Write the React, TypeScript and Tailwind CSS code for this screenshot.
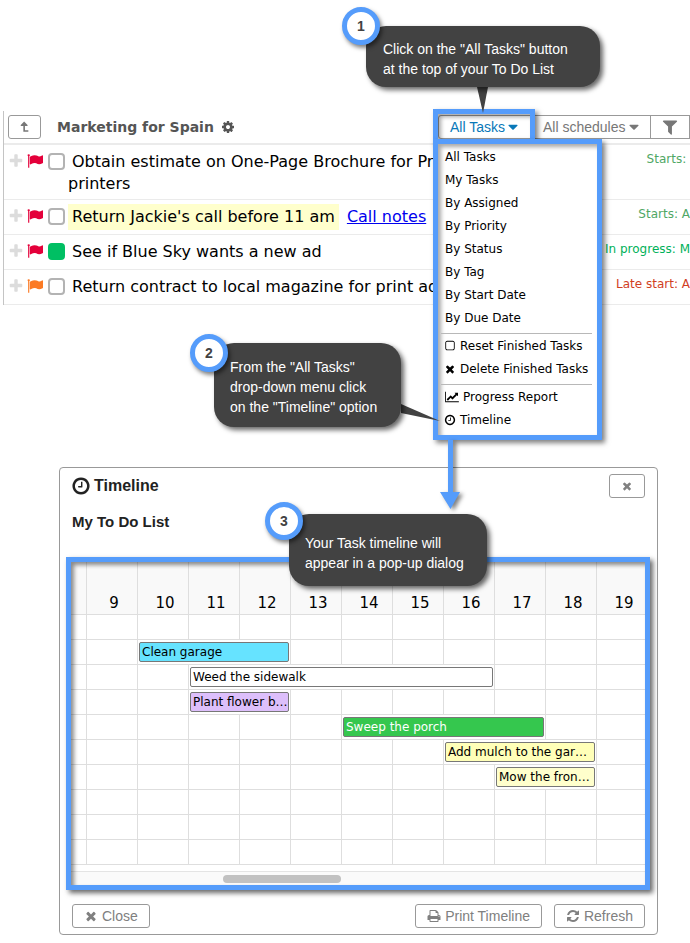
import type { ReactNode } from "react"

const ICONS = {
  plus: "M1600 736v192q0 40-28 68t-68 28h-416v416q0 40-28 68t-68 28h-192q-40 0-68-28t-28-68v-416h-416q-40 0-68-28t-28-68v-192q0-40 28-68t68-28h416v-416q0-40 28-68t68-28h192q40 0 68 28t28 68v416h416q40 0 68 28t28 68z",
  flag: "M320 256q0 72-64 110v1266q0 13-9.5 22.5t-22.5 9.5h-64q-13 0-22.5-9.5t-9.5-22.5v-1266q-64-38-64-110 0-53 37.5-90.5t90.5-37.5 90.5 37.5 37.5 90.5zm1472 64v763q0 25-12.5 38.5t-39.5 27.5q-215 116-369 116-61 0-123.5-22t-108.5-48-115.5-48-142.5-22q-192 0-464 146-17 9-33 9-26 0-45-19t-19-45v-742q0-32 31-55 21-14 79-43 236-120 421-120 107 0 200 29t219 88q38 19 88 19 54 0 117.5-21t110-47 88-47 54.5-21q26 0 45 19t19 45z",
  cog: "M1152 896q0-106-75-181t-181-75-181 75-75 181 75 181 181 75 181-75 75-181zm512-109v222q0 12-8 23t-20 13l-185 28q-19 54-39 91 35 50 107 138 10 12 10 25t-9 23q-27 37-99 108t-94 71q-12 0-26-9l-138-108q-44 23-91 38-16 136-29 186-7 28-36 28h-222q-14 0-24.5-8.5t-11.5-21.5l-28-184q-49-16-90-37l-141 107q-10 9-25 9-14 0-25-11-126-114-165-168-7-10-7-23 0-12 8-23 15-21 51-66.5t54-70.5q-27-50-41-99l-183-27q-13-2-21-12.5t-8-23.5v-222q0-12 8-23t19-13l186-28q14-46 39-92-40-57-107-138-10-12-10-24 0-10 9-23 26-36 98.5-107.5t94.5-71.5q13 0 26 10l138 107q44-23 91-38 16-136 29-186 7-28 36-28h222q14 0 24.5 8.5t11.5 21.5l28 184q49 16 90 37l142-107q9-9 24-9 13 0 25 10 129 119 165 170 7 8 7 22 0 12-8 23-15 21-51 66.5t-54 70.5q26 50 41 98l183 28q13 2 21 12.5t8 23.5z",
  filter: "M1595 295q17 41-14 70l-493 493v742q0 42-39 59-13 5-25 5-27 0-45-19l-256-256q-19-19-19-45v-486l-493-493q-31-29-14-70 17-39 59-39h1280q42 0 59 39z",
  times: "M1490 1322q0 40-28 68l-136 136q-28 28-68 28t-68-28l-294-294-294 294q-28 28-68 28t-68-28l-136-136q-28-28-28-68t28-68l294-294-294-294q-28-28-28-68t28-68l136-136q28-28 68-28t68 28l294 294 294-294q28-28 68-28t68 28l136 136q28 28 28 68t-28 68l-294 294 294 294q28 28 28 68z",
  clock: "M1024 544v448q0 14-9 23t-23 9h-320q-14 0-23-9t-9-23v-64q0-14 9-23t23-9h224v-352q0-14 9-23t23-9h64q14 0 23 9t9 23zm416 352q0-148-73-273t-198-198-273-73-273 73-198 198-73 273 73 273 198 198 273 73 273-73 198-198 73-273zm224 0q0 209-103 385.5t-279.5 279.5-385.5 103-385.5-103-279.5-279.5-103-385.5 103-385.5 279.5-279.5 385.5-103 385.5 103 279.5 279.5 103 385.5z",
  square: "M1312 256h-832q-66 0-113 47t-47 113v832q0 66 47 113t113 47h832q66 0 113-47t47-113v-832q0-66-47-113t-113-47zm288 160v832q0 119-84.5 203.5t-203.5 84.5h-832q-119 0-203.5-84.5t-84.5-203.5v-832q0-119 84.5-203.5t203.5-84.5h832q119 0 203.5 84.5t84.5 203.5z",
  chart: "M2048 1536v128h-2048v-1536h128v1408h1920zm-128-1248v435q0 21-19.5 29.5t-35.5-7.5l-121-121-633 633q-10 10-23 10t-23-10l-233-233-416 416-192-192 585-585q10-10 23-10t23 10l233 233 464-464-121-121q-16-16-7.5-35.5t29.5-19.5h435q14 0 23 9t9 23z",
  print: "M448 1536h896v-256h-896v256zm0-640h896v-384h-160q-40 0-68-28t-28-68v-160h-640v640zm1152 64q0-26-19-45t-45-19-45 19-19 45 19 45 45 19 45-19 19-45zm128 0v416q0 13-9.5 22.5t-22.5 9.5h-224v160q0 40-28 68t-68 28h-960q-40 0-68-28t-28-68v-160h-224q-13 0-22.5-9.5t-9.5-22.5v-416q0-79 56.5-135.5t135.5-56.5h64v-544q0-40 28-68t68-28h672q40 0 88 20t76 48l152 152q28 28 48 76t20 88v256h64q79 0 135.5 56.5t56.5 135.5z",
  refresh: "M1639 1056q0 5-1 7-64 268-268 434.5t-478 166.5q-146 0-282.5-55t-243.5-157l-129 129q-19 19-45 19t-45-19-19-45v-448q0-26 19-45t45-19h448q26 0 45 19t19 45-19 45l-137 137q71 66 161 102t187 36q134 0 250-65t186-179q11-17 53-117 8-23 30-23h192q13 0 22.5 9.5t9.5 22.5zm25-800v448q0 26-19 45t-45 19h-448q-26 0-45-19t-19-45 19-45l138-138q-148-137-349-137-134 0-250 65t-186 179q-11 17-53 117-8 23-30 23h-199q-13 0-22.5-9.5t-9.5-22.5v-7q65-268 270-434.5t480-166.5q146 0 284 55.5t245 156.5l130-129q19-19 45-19t45 19 19 45z",
  caret: "M1408 704q0 26-19 45l-448 448q-19 19-45 19t-45-19l-448-448q-19-19-19-45t19-45 45-19h896q26 0 45 19t19 45z",
  level: "M800 280l-380 400v110h290v650h560v-190h-380v-460h290v-110z",
}

type IconName = keyof typeof ICONS

function Icon({ name, className }: { name: IconName; className: string }) {
  return (
    <svg
      viewBox={name === "chart" ? "0 0 2048 1792" : "0 0 1792 1792"}
      className={`shrink-0 fill-current ${className}`}
      aria-hidden="true"
    >
      <path d={ICONS[name]} />
    </svg>
  )
}

interface Task {
  title: ReactNode
  label: string
  flag: string
  checked?: boolean
  highlight?: boolean
  link?: string
  status: string
  statusColor: string
}

const tasks: Task[] = [
  {
    title: (
      <>
        Obtain estimate on One-Page Brochure for Pr
        <br />
        printers
      </>
    ),
    label: "Obtain estimate",
    flag: "text-[#e4003a]",
    status: "Starts:\u00a0",
    statusColor: "text-[#4fa765]",
  },
  {
    title: "Return Jackie's call before 11 am",
    label: "Return call",
    flag: "text-[#e4003a]",
    highlight: true,
    link: "Call notes",
    status: "Starts: A",
    statusColor: "text-[#4fa765]",
  },
  {
    title: "See if Blue Sky wants a new ad",
    label: "See Blue Sky",
    flag: "text-[#e4003a]",
    checked: true,
    status: "In progress: M",
    statusColor: "text-[#00b159]",
  },
  {
    title: "Return contract to local magazine for print ad",
    label: "Return contract",
    flag: "text-[#fb7a24]",
    status: "Late start: A",
    statusColor: "text-[#d1401f]",
  },
]

const views = [
  "All Tasks",
  "My Tasks",
  "By Assigned",
  "By Priority",
  "By Status",
  "By Tag",
  "By Start Date",
  "By Due Date",
]

const days = [9, 10, 11, 12, 13, 14, 15, 16, 17, 18, 19]

interface Bar {
  title: string
  from: number
  to: number
  color: string
}

const rows: (Bar | null)[] = [
  null,
  { title: "Clean garage", from: 10, to: 12, color: "bg-[#66e3ff] text-black" },
  { title: "Weed the sidewalk", from: 11, to: 16, color: "bg-white text-black" },
  { title: "Plant flower b…", from: 11, to: 12, color: "bg-[#ddbffb] text-black" },
  { title: "Sweep the porch", from: 14, to: 17, color: "bg-[#35c74e] text-white" },
  { title: "Add mulch to the gar…", from: 16, to: 18, color: "bg-[#ffffb8] text-black" },
  { title: "Mow the fron…", from: 17, to: 18, color: "bg-[#ffffcc] text-black" },
  null,
  null,
  null,
]

function Callout({
  step,
  className,
  badgeClassName,
  children,
}: {
  step: number
  className: string
  badgeClassName: string
  children: ReactNode
}) {
  return (
    <div
      className={`absolute z-20 whitespace-nowrap rounded-[20px] bg-[#424242] font-['Liberation_Sans',sans-serif] text-sm leading-5 text-white shadow-[3px_3px_5px_rgba(0,0,0,0.6)] ${className}`}
    >
      <span
        className={`absolute -left-6 flex size-[38px] items-center justify-center rounded-full border-[5px] border-[#559cfb] bg-white font-bold text-[#424242] shadow-[2px_3px_4px_rgba(0,0,0,0.5)] ${badgeClassName}`}
      >
        {step}
      </span>
      {children}
    </div>
  )
}

function TaskRow({ task }: { task: Task }) {
  return (
    <li className="flex min-h-[35px] items-start border-b border-[#ebebeb] pl-1 font-['DejaVu_Sans',sans-serif]">
      <div className="flex h-8 w-[60px] shrink-0 items-center">
        <Icon name="plus" className="mr-[3px] size-4 text-[#dcdcdc]" />
        <Icon name="flag" className={`mr-[5px] size-4 ${task.flag}`} />
        <input
          type="checkbox"
          aria-label={task.label}
          defaultChecked={task.checked}
          className="size-[17px] shrink-0 appearance-none rounded-[4px] border-2 border-[#b3b3b3] bg-white checked:border-[#00bf63] checked:bg-[#00bf63]"
        />
      </div>
      <div className="grow whitespace-nowrap pt-1.5 pb-1 text-base leading-[22px]">
        <span className={`-my-0.5 inline-block py-0.5 pr-1 indent-1 ${task.highlight ? "bg-[#ffffcc]" : ""}`}>
          {task.title}
        </span>
        {task.link && (
          <a href="#notes" className="ml-2 text-[#0000ee] underline">
            {task.link}
          </a>
        )}
      </div>
      <span className={`pt-1 text-xs leading-5 whitespace-nowrap ${task.statusColor}`}>{task.status}</span>
    </li>
  )
}

function MenuItem({ icon, children }: { icon?: ReactNode; children: ReactNode }) {
  return (
    <li>
      <button type="button" className="flex h-[23px] w-full items-center gap-1 pl-[7px]">
        {icon}
        {children}
      </button>
    </li>
  )
}

function TasksMenu() {
  return (
    <ul className="absolute left-[-5px] top-6 z-10 w-[169px] whitespace-nowrap border-5 border-[#559cfb] bg-white pt-px pb-1 font-['DejaVu_Sans',sans-serif] text-xs text-black shadow-[3px_3px_5px_rgba(0,0,0,0.5),inset_3px_3px_4px_rgba(0,0,0,0.35)]">
      {views.map((view) => (
        <MenuItem key={view}>{view}</MenuItem>
      ))}
      <li className="mt-1 mr-[5px] ml-[3px] border-t border-[#b8b8b8]" />
      <MenuItem icon={<Icon name="square" className="-ml-px size-3" />}>Reset Finished Tasks</MenuItem>
      <MenuItem icon={<Icon name="times" className="-ml-px size-3" />}>Delete Finished Tasks</MenuItem>
      <li className="mt-1 mr-[5px] ml-[3px] border-t border-[#b8b8b8]" />
      <MenuItem icon={<Icon name="chart" className="h-3 w-3.5" />}>Progress Report</MenuItem>
      <MenuItem icon={<Icon name="clock" className="-ml-px size-3" />}>Timeline</MenuItem>
    </ul>
  )
}

function ToDoList() {
  return (
    <section className="relative z-10 ml-[3px] border-l border-[#c4c4c4]">
      <header className="flex h-[34px] items-start border-b-2 border-[#ebebeb] pt-1 pl-1 text-[#555]">
        <button
          type="button"
          aria-label="Up one level"
          className="flex h-6 w-[33px] items-center justify-center rounded-[3px] border border-[#999] text-[#777]"
        >
          <Icon name="level" className="size-4" />
        </button>
        <h1 className="ml-4 font-['DejaVu_Sans',sans-serif] text-sm leading-6 font-bold">Marketing for Spain</h1>
        <button type="button" aria-label="List settings" className="ml-[7px] flex h-6 items-center">
          <Icon name="cog" className="size-[14px]" />
        </button>
        <div className="ml-auto flex font-['Liberation_Sans',sans-serif] text-sm text-[#777]">
          <div className="relative">
            <button
              type="button"
              className="flex h-6 w-[97px] items-center rounded-l-[3px] border border-[#999] pl-[11px] text-[#0878b8]"
            >
              All Tasks
              <Icon name="caret" className="size-4" />
            </button>
            <div className="pointer-events-none absolute -top-1.5 left-[-5px] z-[5] h-[35px] w-[102px] border-5 border-[#559cfb] shadow-[3px_3px_5px_rgba(0,0,0,0.5),inset_3px_3px_4px_rgba(0,0,0,0.35)]" />
            <TasksMenu />
            <svg
              className="pointer-events-none absolute -top-7 left-[-38px] z-20 h-[340px] w-[100px]"
              viewBox="0 0 100 340"
              aria-hidden="true"
            >
              <path d="M77 0h11l-5 26z" fill="#424242" />
              <path d="M1 317l39 17-39-8z" fill="#424242" />
            </svg>
            <svg
              className="pointer-events-none absolute top-[325px] left-0.5 z-20 h-[74px] w-8 overflow-visible drop-shadow-[3px_2px_2px_rgba(0,0,0,0.5)]"
              viewBox="0 0 32 74"
              aria-hidden="true"
            >
              <path d="M8 0h5v52h7l-9.500 17-10.500-17h8z" fill="#559cfb" />
            </svg>
            <Callout step={1} className="-top-[89px] left-[-72px] w-[234px] pt-[13px] pb-2 pl-[17px]" badgeClassName="-top-[19px]">
              Click on the "All Tasks" button
              <br />
              at the top of your To Do List
            </Callout>
            <Callout step={2} className="top-[228px] left-[-224px] w-[187px] pt-3.5 pb-2.5 pl-4" badgeClassName="-top-[9px]">
              From the "All Tasks"
              <br />
              drop-down menu click
              <br />
              on the "Timeline" option
            </Callout>
          </div>
          <button type="button" className="flex h-6 w-[115px] items-center border-y border-[#999] pl-2">
            All schedules
            <Icon name="caret" className="size-4" />
          </button>
          <button
            type="button"
            aria-label="Filter"
            className="flex h-6 w-10 items-center justify-center border border-[#999]"
          >
            <Icon name="filter" className="size-[18px]" />
          </button>
        </div>
      </header>
      <ul>
        {tasks.map((task) => (
          <TaskRow key={task.label} task={task} />
        ))}
      </ul>
    </section>
  )
}

function DialogButton({ icon, children }: { icon: IconName; children: ReactNode }) {
  return (
    <button
      type="button"
      className="flex h-6 items-center gap-1 rounded-[3px] border border-[#999] px-[11px] text-sm text-[#808080]"
    >
      <Icon name={icon} className="size-[14px]" />
      {children}
    </button>
  )
}

function TimelineRow({ bar }: { bar: Bar | null }) {
  const cell = "border-r border-b border-[#dedede] p-0"
  const before = days.filter((day) => !bar || day < bar.from)
  const after = days.filter((day) => bar && day > bar.to)

  return (
    <tr className="h-[25px]">
      <td className={cell} />
      {before.map((day) => (
        <td key={day} className={cell} />
      ))}
      {bar && (
        <td colSpan={bar.to - bar.from + 1} className={cell}>
          <div
            className={`mx-px h-5 rounded-[2px] border border-[#777] pl-0.5 text-xs leading-[18px] whitespace-nowrap ${bar.color}`}
          >
            {bar.title}
          </div>
        </td>
      )}
      {after.map((day) => (
        <td key={day} className={cell} />
      ))}
    </tr>
  )
}

function Timeline() {
  return (
    <div className="relative mr-[7px] ml-1.5 border-5 border-[#559cfb] shadow-[3px_3px_5px_rgba(0,0,0,0.6)]">
      <div className="overflow-hidden font-['DejaVu_Sans',sans-serif]">
        <table className="w-[577px] table-fixed border-separate border-spacing-0">
          <colgroup>
            <col className="w-4" />
            {days.map((day) => (
              <col key={day} className="w-[51px]" />
            ))}
          </colgroup>
          <thead>
            <tr className="h-[53px] bg-[#f9f9f9]">
              <td className="border-r border-b border-[#dedede]" />
              {days.map((day) => (
                <th
                  key={day}
                  scope="col"
                  className="border-r border-b border-[#dedede] p-0 pb-px pl-1 align-bottom text-[15px] leading-5 font-normal"
                >
                  {day}
                </th>
              ))}
            </tr>
          </thead>
          <tbody>
            {rows.map((bar, i) => (
              <TimelineRow key={i} bar={bar} />
            ))}
          </tbody>
        </table>
        <div className="mt-1.5 h-[14px] border-t border-[#e4e4e4] bg-[#fafafa] pt-[3px]">
          <div className="ml-[152px] h-2 w-[118px] rounded-full bg-[#c1c1c1]" />
        </div>
      </div>
      <div className="pointer-events-none absolute inset-0 shadow-[inset_3px_3px_4px_rgba(0,0,0,0.45)]" />
    </div>
  )
}

function TimelineDialog() {
  return (
    <section
      role="dialog"
      aria-labelledby="timeline-title"
      className="relative mt-[162px] mr-8 ml-[59px] rounded-[4px] border border-[#999] pb-1.5 font-['Liberation_Sans',sans-serif]"
    >
      <header className="flex items-center px-3 pt-1.5 text-[#222]">
        <Icon name="clock" className="-ml-px size-5" />
        <h2 id="timeline-title" className="ml-[3px] text-base leading-6 font-bold">
          Timeline
        </h2>
        <button
          type="button"
          aria-label="Close dialog"
          className="ml-auto flex h-6 w-9 items-center justify-center rounded-[3px] border border-[#999] text-[#808080]"
        >
          <Icon name="times" className="size-3" />
        </button>
      </header>
      <h3 className="mt-3 mb-[23px] px-3 text-[15px] leading-6 font-bold text-[#222]">My To Do List</h3>
      <Timeline />
      <footer className="mt-3.5 flex gap-3 px-3">
        <DialogButton icon="times">Close</DialogButton>
        <span className="grow" />
        <DialogButton icon="print">Print Timeline</DialogButton>
        <DialogButton icon="refresh">Refresh</DialogButton>
      </footer>
      <Callout step={3} className="top-[46px] left-[229px] w-[198px] pt-[19px] pb-[13px] pl-4" badgeClassName="-top-3">
        Your Task timeline will
        <br />
        appear in a pop-up dialog
      </Callout>
    </section>
  )
}

export default function App() {
  return (
    <main className="min-h-screen overflow-hidden bg-white pt-[111px] pb-2 text-black">
      <ToDoList />
      <TimelineDialog />
    </main>
  )
}
